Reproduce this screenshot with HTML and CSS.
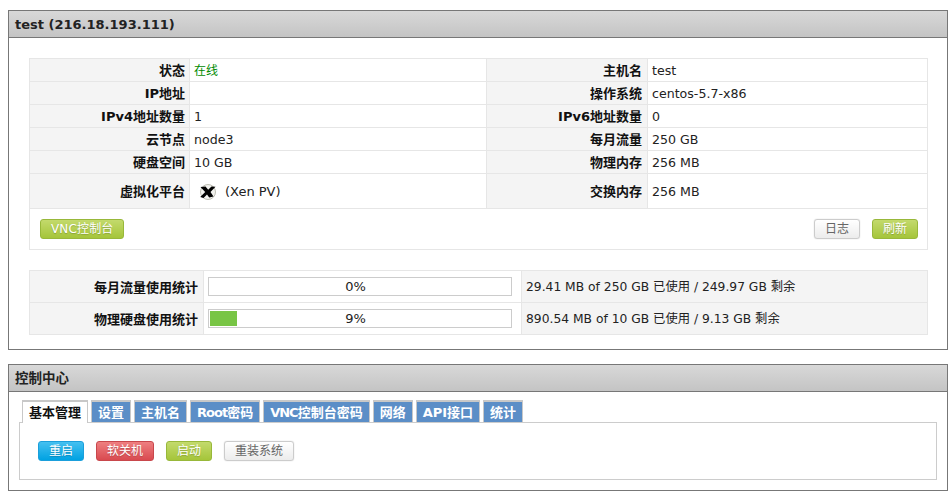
FILE: index.html
```html
<!DOCTYPE html>
<html lang="zh">
<head>
<meta charset="utf-8">
<title>test</title>
<link rel="stylesheet" href="styles.css">
</head>
<body>
<section class="panel panel-info">
  <h2 class="panel-head">test (216.18.193.111)</h2>
  <div class="panel-body">
    <div class="info">
      <table class="grid">
        <colgroup><col class="c1"><col class="c2"><col class="c3"><col class="c4"></colgroup>
        <tr><th>状态</th><td class="online">在线</td><th>主机名</th><td>test</td></tr>
        <tr><th>IP地址</th><td></td><th>操作系统</th><td>centos-5.7-x86</td></tr>
        <tr><th>IPv4地址数量</th><td>1</td><th>IPv6地址数量</th><td>0</td></tr>
        <tr><th>云节点</th><td>node3</td><th>每月流量</th><td>250 GB</td></tr>
        <tr><th>硬盘空间</th><td>10 GB</td><th>物理内存</th><td>256 MB</td></tr>
        <tr class="tall"><th>虚拟化平台</th><td><span class="xen"><svg class="xen-icon" width="18" height="18" viewBox="0 0 18 18"><circle cx="9" cy="9" r="7.5" fill="#f2f2ee" stroke="#bdbdb2"/><path d="M1.5 4 L6.5 3.5 L9.2 6.8 L12.5 3.5 L16.5 3.8 L11.5 9 L14.5 13.5 L10.2 14.5 L8 11.5 L4.5 15 L1.2 14 L6.2 9 Z" fill="#000"/></svg>(Xen PV)</span></td><th>交换内存</th><td>256 MB</td></tr>
      </table>
      <div class="actions">
        <button class="btn green vnc">VNC控制台</button>
        <div class="actions-right">
          <button class="btn plain">日志</button>
          <button class="btn green">刷新</button>
        </div>
      </div>
    </div>
    <table class="grid usage">
      <colgroup><col class="u1"><col class="u2"><col></colgroup>
      <tr>
        <th>每月流量使用统计</th>
        <td class="bar-cell"><div class="bar"><span class="bar-text">0%</span></div></td>
        <td class="usage-text">29.41 MB of 250 GB 已使用 / 249.97 GB 剩余</td>
      </tr>
      <tr>
        <th>物理硬盘使用统计</th>
        <td class="bar-cell"><div class="bar"><div class="fill" style="width:9%"></div><span class="bar-text">9%</span></div></td>
        <td class="usage-text">890.54 MB of 10 GB 已使用 / 9.13 GB 剩余</td>
      </tr>
    </table>
  </div>
</section>
<section class="panel panel-control">
  <h2 class="panel-head head-cjk">控制中心</h2>
  <div class="control-body">
    <ul class="tabs">
      <li class="tab active">基本管理</li>
      <li class="tab">设置</li>
      <li class="tab">主机名</li>
      <li class="tab"><span class="tight">Root</span>密码</li>
      <li class="tab"><span class="tight">VNC</span>控制台密码</li>
      <li class="tab">网络</li>
      <li class="tab">API接口</li>
      <li class="tab">统计</li>
    </ul>
    <div class="tab-box">
      <button class="btn blue">重启</button>
      <button class="btn red">软关机</button>
      <button class="btn green">启动</button>
      <button class="btn plain">重装系统</button>
    </div>
  </div>
</section>
</body>
</html>
```
FILE: styles.css
```css
* { box-sizing: border-box; }
html, body { background: #fff; }
body {
  margin: 10px 0 0 8px;
  width: 940px;
  font: 13px/1.2 "DejaVu Sans", "Noto Sans CJK SC", sans-serif;
  color: #222;
}
.panel { border: 1px solid #777; }
.panel-info { height: 340px; }
.panel-control { height: 127px; margin-top: 14px; }
.panel-head {
  margin: 0;
  height: 27px;
  padding: 1px 0 0 6px;
  font-size: 13px;
  line-height: 26px;
  font-weight: bold;
  color: #222;
  border-bottom: 1px solid #777;
  background: linear-gradient(#d8d8d8, #c4c4c4);
}
.head-cjk { font-size: 13.5px; padding-top: 0; }
.panel-body { padding: 20px 19px 0 20px; }
.grid {
  width: 100%;
  table-layout: fixed;
  border-collapse: collapse;
}
.grid th, .grid td {
  border: 1px solid #e6e6e6;
  height: 23px;
  padding: 2px 4px 0;
  font-weight: normal;
  font-size: 12.6px;
}
.grid th {
  background: #f4f4f4;
  text-align: right;
  font-weight: bold;
  font-size: 13px;
  color: #111;
}
.grid th:nth-child(3) { padding-right: 5px; }
.c1 { width: 160px; }
.c2 { width: 297px; }
.c3 { width: 161px; }
.grid .online { color: #008a00; font-size: 12px; }
.grid .tall th, .grid .tall td { height: 35px; }
.xen { display: flex; align-items: center; padding-left: 5px; font-size: 13px; }
.xen-icon { margin-right: 8px; }
.info { border: 1px solid #e6e6e6; border-top: 0; }
.info .grid { margin: 0 -1px; width: calc(100% + 2px); }
.actions {
  display: flex;
  justify-content: space-between;
  align-items: flex-start;
  height: 40px;
  padding: 10px 9px 0 10px;
}
.actions-right { display: flex; gap: 12px; }
.btn {
  height: 20px;
  padding: 1px 10px 0;
  border: 1px solid;
  border-radius: 3px;
  font: 12px/17px "DejaVu Sans", "Noto Sans CJK SC", sans-serif;
  color: #fff;
  text-shadow: 0 1px 1px rgba(0, 0, 0, 0.2);
}
.vnc { letter-spacing: 0.15px; }
.green { background: linear-gradient(#c3da6c, #a5c53a); border-color: #98b83a; }
.plain { background: linear-gradient(#fff, #ececec); border-color: #ccc; color: #666; text-shadow: none; box-shadow: 0 0 1px #bbb; }
.blue { background: linear-gradient(#45c0f0, #00a2e2); border-color: #1b9fdb; }
.red { background: linear-gradient(#ee7f80, #d94a50); border-color: #c8474c; }
.usage { margin-top: 20px; }
.usage th, .usage td { height: 32px; }
.u1 { width: 174px; }
.u2 { width: 318px; }
.usage th { padding-right: 5px; }
.grid .bar-cell { padding: 0 9px 0 4px; font-size: 13px; }
.bar {
  position: relative;
  height: 19px;
  border: 1px solid #ccc;
  padding: 1px 10px 1px 1px;
  text-align: center;
}
.fill { position: absolute; left: 1px; top: 1px; bottom: 1px; background: #78c545; }
.bar-text { position: relative; line-height: 15px; }
.grid .usage-text { padding-left: 4px; font-size: 12.3px; background: #f4f4f4; }
.control-body { padding: 8px 10px 0; }
.tabs {
  display: flex;
  gap: 3px;
  margin: 0 0 0 3px;
  padding: 0;
  list-style: none;
  position: relative;
  z-index: 1;
  height: 23px;
}
.tab {
  height: 22px;
  padding: 0 6px;
  border: 1px solid #c8c8c8;
  border-top-width: 2px;
  border-bottom: 0;
  background: #5b8ec7;
  color: #fff;
  font-weight: bold;
  line-height: 21px;
}
.tight { letter-spacing: -1px; }
.tab.active {
  height: 23px;
  padding: 0 6px;
  background: #fff;
  color: #111;
}
.tab-box {
  display: flex;
  gap: 12px;
  height: 58px;
  margin-top: -1px;
  padding: 18px 0 0 18px;
  border: 1px solid #ccc;
}
```
